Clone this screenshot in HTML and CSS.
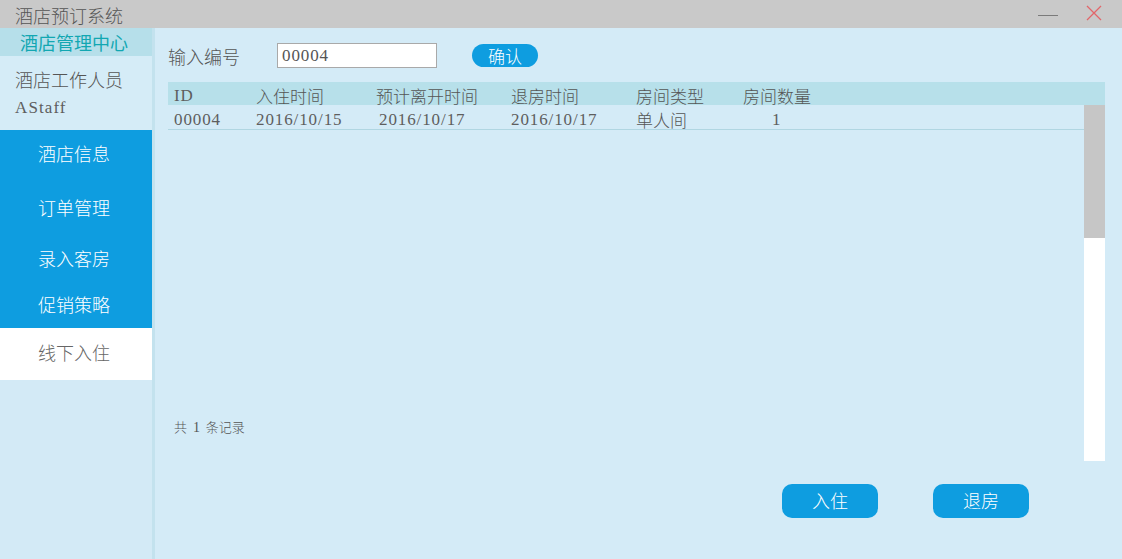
FILE: index.html
```html
<!DOCTYPE html>
<html lang="zh-CN">
<head>
<meta charset="utf-8">
<title>酒店预订系统</title>
<link rel="stylesheet" href="styles.css">
</head>
<body>
<div class="window">
  <header class="titlebar">
    <span class="title">酒店预订系统</span>
    <div class="controls">
      <span class="min"></span>
      <svg class="close" width="16" height="16" viewBox="0 0 16 16"><path d="M1 1 L15 15 M15 1 L1 15" stroke="#e2666a" stroke-width="1.3" fill="none"/></svg>
    </div>
  </header>
  <div class="content">
    <aside class="sidebar">
      <div class="brand">酒店管理中心</div>
      <div class="user">
        <div class="role">酒店工作人员</div>
        <div class="uname">AStaff</div>
      </div>
      <nav class="menu">
        <div class="item i1">酒店信息</div>
        <div class="item i2">订单管理</div>
        <div class="item i3">录入客房</div>
        <div class="item i4">促销策略</div>
      </nav>
      <div class="item active">线下入住</div>
    </aside>
    <main class="main">
      <div class="search">
        <span class="label">输入编号</span>
        <div class="input">00004</div>
        <button class="confirm">确认</button>
      </div>
      <section class="table">
        <div class="thead">
          <span class="serif">ID</span><span>入住时间</span><span>预计离开时间</span><span>退房时间</span><span>房间类型</span><span>房间数量</span>
        </div>
        <div class="tbody">
          <div class="rows">
            <div class="row">
              <span class="serif">00004</span><span class="serif">2016/10/15</span><span class="serif shift">2016/10/17</span><span class="serif">2016/10/17</span><span>单人间</span><span class="serif count">1</span>
            </div>
            <div class="total">共 <span class="num">1</span> 条记录</div>
          </div>
          <div class="scrollbar"><div class="thumb"></div></div>
        </div>
      </section>
      <div class="actions">
        <button class="btn">入住</button>
        <button class="btn">退房</button>
      </div>
    </main>
  </div>
</div>
</body>
</html>
```
FILE: styles.css
```css
* { box-sizing: border-box; }
html, body { margin: 0; padding: 0; }
body {
  width: 1122px;
  height: 559px;
  overflow: hidden;
  font-family: "Noto Sans CJK SC", "Noto Sans", sans-serif;
  font-weight: 300;
  color: #555;
  background: #d4ebf7;
}
.window { display: flex; flex-direction: column; height: 559px; }
.titlebar {
  height: 28px;
  background: #c9c9c9;
  display: flex;
  align-items: center;
  justify-content: space-between;
  padding: 0 20px 0 15px;
}
.title { font-size: 18px; color: #555; line-height: 28px; margin-top: 1px; }
.controls { display: flex; align-items: center; gap: 28px; }
.min { width: 20px; height: 1px; background: #7a7a7a; margin-top: 2px; }
.close { display: block; margin-top: -2px; }

.content { flex: 1; display: flex; }
.sidebar {
  width: 155px;
  border-right: 3px solid #c3e2ee;
  background: #d3eaf6;
  display: flex;
  flex-direction: column;
}
.brand {
  height: 28px;
  background: #b6dfea;
  color: #12a7b2;
  font-size: 18px;
  font-weight: 400;
  line-height: 28px;
  text-align: center;
  padding-right: 4px;
}
.serif { font-family: "Liberation Serif", serif; font-size: 17px; letter-spacing: 0.9px; color: #5e5e5e; }
.user { height: 74px; padding: 12px 0 0 15px; background: #d5ecf7; }
.role { font-size: 18px; line-height: 22px; color: #555; }
.uname { font-family: "Liberation Serif", serif; font-size: 17px; letter-spacing: 1.1px; line-height: 20px; margin-top: 8px; color: #5e5e5e; }
.menu { background: #0e9de0; display: flex; flex-direction: column; }
.item {
  color: #fff;
  font-size: 18px;
  display: flex;
  align-items: center;
  padding-left: 38px;
}
.i1 { height: 46px; padding-bottom: 1px; }
.i2 { height: 60px; padding-top: 2px; }
.i3 { height: 44px; }
.i4 { height: 48px; }
.item.active { background: #fff; color: #666; height: 52px; padding-bottom: 4px; }

.main { flex: 1; padding: 15px 17px 0 13px; display: flex; flex-direction: column; }
.search { display: flex; align-items: center; height: 25px; }
.label { font-size: 18px; width: 109px; color: #555; }
.input {
  width: 160px;
  height: 25px;
  background: #fff;
  border: 1px solid #a9a9a9;
  font-family: "Liberation Serif", serif;
  font-size: 17px;
  letter-spacing: 0.9px;
  line-height: 24px;
  padding-left: 4px;
  color: #555;
}
.confirm {
  margin-left: 35px;
  width: 66px;
  height: 23px;
  border: none;
  border-radius: 12px;
  background: #0e9de0;
  color: #fff;
  font-family: inherit;
  font-weight: 300;
  font-size: 17px;
  line-height: 23px;
  padding: 0;
}

.table { margin-top: 14px; width: 937px; display: flex; flex-direction: column; height: 379px; }
.thead, .row {
  display: grid;
  grid-template-columns: 82px 120px 135px 125px 107px 1fr;
  padding-left: 6px;
  align-items: center;
}
.thead { height: 23px; background: #b7e0ea; font-size: 17px; line-height: 23px; padding-top: 2px; }
.tbody { flex: 1; display: flex; }
.rows { flex: 1; display: flex; flex-direction: column; }
.row { height: 25px; border-bottom: 1px solid #b0d6e2; font-size: 17px; line-height: 23px; padding-top: 3px; }
.shift { padding-left: 3px; }
.count { padding-left: 29px; }
.total { margin-top: auto; margin-bottom: 25px; padding-left: 6px; font-size: 13px; color: #555; word-spacing: 3px; }
.total .num { font-family: "Liberation Serif", serif; font-size: 14px; }
.scrollbar { width: 21px; background: #fff; display: flex; flex-direction: column; }
.thumb { height: 133px; background: #c6c6c6; }

.actions { display: flex; justify-content: flex-end; gap: 55px; margin-top: 23px; padding-right: 76px; }
.btn {
  width: 96px;
  height: 34px;
  border: none;
  border-radius: 10px;
  background: #0e9de0;
  color: #fff;
  font-family: inherit;
  font-weight: 300;
  font-size: 18px;
  padding: 0 0 2px;
}
```
